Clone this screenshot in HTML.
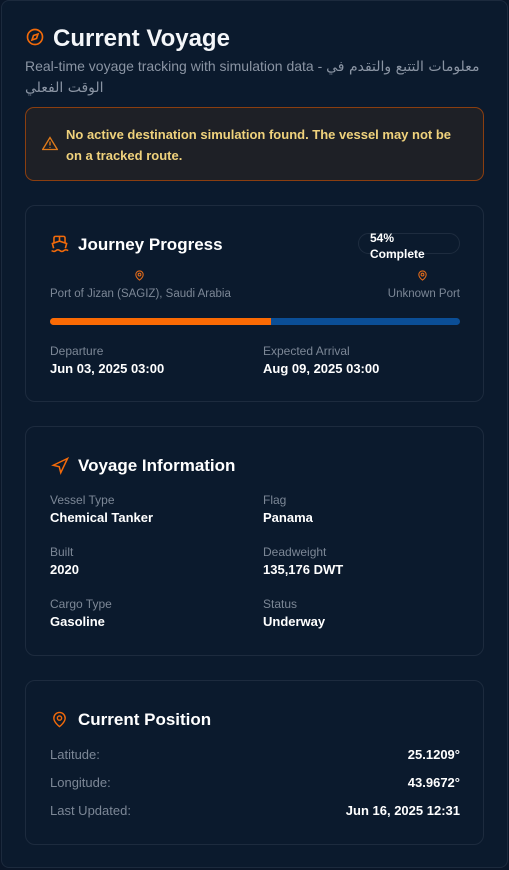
<!DOCTYPE html>
<html><head><style>
*{box-sizing:border-box;margin:0;padding:0}
body{width:509px;height:870px;background:#0a1628;font-family:"Liberation Sans","Noto Sans CJK SC",sans-serif;color:#fff;overflow:hidden;position:relative}
.outer{position:absolute;left:1px;top:0;width:507px;height:868px;border:1px solid #1c2a3d;border-radius:8px;background:#0b1a2d}
.abs{position:absolute}
.card{position:absolute;left:25px;width:459px;border:1px solid #1d2b3e;border-radius:10px;background:#0b1a2d}
.lbl{position:absolute;font-size:12px;color:#7c8796}
.val{position:absolute;font-size:13px;font-weight:bold;color:#fff}
.ttl{position:absolute;font-size:17px;font-weight:bold;color:#fff}
</style></head><body>
<div class="outer"></div>
<svg class="abs" style="left:26px;top:28px" width="18" height="18" viewBox="0 0 24 24" fill="none" stroke="#f26a0a" stroke-width="2.2"><circle cx="12" cy="12" r="10"/><path d="M16 8l-2 6-6 2 2-6z"/></svg>
<div class="abs" style="left:53px;top:25px;font-size:24px;font-weight:bold;color:#f4f6f9">Current Voyage</div>
<div class="abs" style="left:25px;top:56px;width:465px;font-size:14px;line-height:20px;color:#8a94a3">Real-time voyage tracking with simulation data - <span style="font-family:'DejaVu Sans',sans-serif;font-size:14px">معلومات التتبع والتقدم في الوقت الفعلي</span></div>
<div class="abs" style="left:25px;top:107px;width:459px;height:74px;border:1px solid #8a3e10;border-radius:9px;background:#1e2026"></div>
<svg class="abs" style="left:42px;top:136px" width="16" height="15" viewBox="0 0 24 22" fill="none" stroke="#e07a1a" stroke-width="2"><path d="M12 2L1 20h22z"/><path d="M12 8v6M12 16.5v1"/></svg>
<div class="abs" style="left:66px;top:124px;width:400px;font-size:13px;line-height:21px;font-weight:bold;color:#f0d27c">No active destination simulation found. The vessel may not be on a tracked route.</div>

<div class="card" style="top:205px;height:197px"></div>
<svg class="abs" style="left:50px;top:234px" width="19" height="19" viewBox="0 0 24 24" fill="none" stroke="#f26a0a" stroke-width="2"><path d="M2 21c1 .6 2 1 3 1 2.5 0 2.5-2 5-2s2.5 2 5 2 2.5-2 5-2c1 0 2 .4 3 1"/><path d="M19.4 18l1.6-6-9-3-9 3 1.6 6"/><path d="M19 11V5a2 2 0 0 0-2-2H7a2 2 0 0 0-2 2v6M12 3v6"/></svg>
<div class="ttl" style="left:78px;top:235px">Journey Progress</div>
<div class="abs" style="left:358px;top:233px;width:102px;height:21px;border:1px solid #1e2c3f;border-radius:11px"></div>
<div class="abs" style="left:370px;top:230px;font-size:12px;line-height:16px;font-weight:bold">54%<br>Complete</div>
<svg class="abs" style="left:134px;top:269px" width="11" height="13" viewBox="0 0 24 24" fill="none" stroke="#e06a1a" stroke-width="2.4"><path d="M20 10c0 6-8 12-8 12S4 16 4 10a8 8 0 0 1 16 0z"/><circle cx="12" cy="10" r="3"/></svg>
<svg class="abs" style="left:417px;top:269px" width="11" height="13" viewBox="0 0 24 24" fill="none" stroke="#e06a1a" stroke-width="2.4"><path d="M20 10c0 6-8 12-8 12S4 16 4 10a8 8 0 0 1 16 0z"/><circle cx="12" cy="10" r="3"/></svg>
<div class="lbl" style="left:50px;top:288px;font-size:11.5px">Port of Jizan (SAGIZ), Saudi Arabia</div>
<div class="lbl" style="right:49px;top:288px;font-size:11.5px">Unknown Port</div>
<div class="abs" style="left:50px;top:318px;width:410px;height:7px;border-radius:4px;background:#0b4e96;overflow:hidden"><div style="width:221px;height:7px;background:#fb6a04"></div></div>
<div class="lbl" style="left:50px;top:344px">Departure</div>
<div class="val" style="left:50px;top:361px">Jun 03, 2025 03:00</div>
<div class="lbl" style="left:263px;top:344px">Expected Arrival</div>
<div class="val" style="left:263px;top:361px">Aug 09, 2025 03:00</div>

<div class="card" style="top:426px;height:230px"></div>
<svg class="abs" style="left:51px;top:457px" width="18" height="18" viewBox="0 0 24 24" fill="none" stroke="#f26a0a" stroke-width="2"><path d="M3 11l19-9-9 19-2-8z"/></svg>
<div class="ttl" style="left:78px;top:456px">Voyage Information</div>
<div class="lbl" style="left:50px;top:493px">Vessel Type</div><div class="val" style="left:50px;top:510px">Chemical Tanker</div>
<div class="lbl" style="left:263px;top:493px">Flag</div><div class="val" style="left:263px;top:510px">Panama</div>
<div class="lbl" style="left:50px;top:545px">Built</div><div class="val" style="left:50px;top:562px">2020</div>
<div class="lbl" style="left:263px;top:545px">Deadweight</div><div class="val" style="left:263px;top:562px">135,176 DWT</div>
<div class="lbl" style="left:50px;top:597px">Cargo Type</div><div class="val" style="left:50px;top:614px">Gasoline</div>
<div class="lbl" style="left:263px;top:597px">Status</div><div class="val" style="left:263px;top:614px">Underway</div>

<div class="card" style="top:680px;height:165px"></div>
<svg class="abs" style="left:51px;top:710px" width="17" height="19" viewBox="0 0 24 24" fill="none" stroke="#f26a0a" stroke-width="2"><path d="M20 10c0 6-8 12-8 12S4 16 4 10a8 8 0 0 1 16 0z"/><circle cx="12" cy="10" r="3"/></svg>
<div class="ttl" style="left:78px;top:710px">Current Position</div>
<div class="lbl" style="left:50px;top:747px;font-size:13px">Latitude:</div><div class="val" style="right:49px;top:747px">25.1209°</div>
<div class="lbl" style="left:50px;top:775px;font-size:13px">Longitude:</div><div class="val" style="right:49px;top:775px">43.9672°</div>
<div class="lbl" style="left:50px;top:803px;font-size:13px">Last Updated:</div><div class="val" style="right:49px;top:803px">Jun 16, 2025 12:31</div>
</body></html>
